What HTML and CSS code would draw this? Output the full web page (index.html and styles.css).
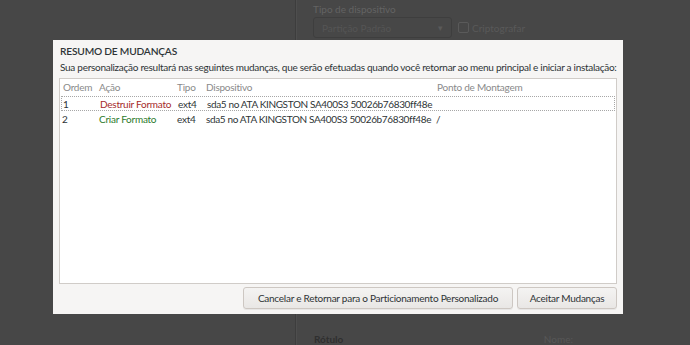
FILE: index.html
```html
<!DOCTYPE html>
<html lang="pt">
<head>
<meta charset="utf-8">
<link rel="stylesheet" href="styles.css">
</head>
<body>
<div class="window">
  <div class="left-pane"></div>
  <div class="sep"></div>
  <div class="right-pane">
    <div class="field-label">Tipo de dispositivo</div>
    <div class="field-row">
      <div class="combo"><span>Partição Padrão</span><span class="arrow">▾</span></div>
      <div class="check"><span class="box"></span><span>Criptografar</span></div>
    </div>
    <div class="spacer"></div>
    <div class="bottom-row">
      <span class="rotulo">Rótulo</span>
      <span class="nome">Nome:</span>
    </div>
  </div>
</div>

<div class="dialog">
  <div class="title">RESUMO DE MUDANÇAS</div>
  <div class="subtitle">Sua personalização resultará nas seguintes mudanças, que serão efetuadas quando você retornar ao menu principal e iniciar a instalação:</div>
  <div class="table">
    <div class="row head">
      <span class="c-ord">Ordem</span>
      <span class="c-acao">Ação</span>
      <span class="c-tipo">Tipo</span>
      <span class="c-disp">Dispositivo</span>
      <span class="c-ponto">Ponto de Montagem</span>
    </div>
    <div class="row focus">
      <span class="c-ord">1</span>
      <span class="c-acao destroy">Destruir Formato</span>
      <span class="c-tipo">ext4</span>
      <span class="c-disp">sda5 no ATA KINGSTON SA400S3 50026b76830ff48e</span>
      <span class="c-ponto"></span>
    </div>
    <div class="row">
      <span class="c-ord">2</span>
      <span class="c-acao create">Criar Formato</span>
      <span class="c-tipo">ext4</span>
      <span class="c-disp">sda5 no ATA KINGSTON SA400S3 50026b76830ff48e</span>
      <span class="c-ponto">/</span>
    </div>
  </div>
  <div class="buttons">
    <button class="btn">Cancelar e Retornar para o Particionamento Personalizado</button>
    <button class="btn">Aceitar Mudanças</button>
  </div>
</div>
</body>
</html>
```
FILE: styles.css
```css
* { box-sizing: border-box; }
html, body {
  margin: 0;
  padding: 0;
  width: 690px;
  height: 345px;
  overflow: hidden;
  background: #474747;
  font-family: "Lato", "Noto Sans", sans-serif;
}
.window {
  display: flex;
  height: 345px;
}
.left-pane {
  width: 295px;
  background: #474747;
}
.sep {
  width: 2px;
  background: #3d3d3d;
  border-right: 1px solid #4e4e4e;
}
.right-pane {
  flex: 1;
  display: flex;
  flex-direction: column;
  padding: 3px 0 0 16px;
  color: #5e5e5e;
  font-size: 10px;
}
.field-label {
  height: 14px;
  color: #636363;
}
.field-row {
  display: flex;
  align-items: center;
  gap: 6px;
}
.combo {
  width: 139px;
  height: 21px;
  border: 1px solid #3e3e3e;
  border-radius: 3px;
  display: flex;
  align-items: center;
  justify-content: space-between;
  padding: 0 8px;
  color: #555;
}
.arrow { font-size: 9px; color: #5a5a5a; }
.check { display: flex; align-items: center; gap: 3px; color: #595959; }
.box {
  width: 11px;
  height: 11px;
  border: 1px solid #5a5a5a;
  border-radius: 2px;
}
.spacer { flex: 1; }
.bottom-row {
  display: flex;
  justify-content: space-between;
  width: 260px;
  height: 11px;
  line-height: 11px;
  padding-left: 1px;
}
.rotulo { color: #2f2f2f; font-weight: bold; }
.nome { color: #575757; }

.dialog {
  position: absolute;
  left: 53px;
  top: 40px;
  width: 570px;
  height: 274px;
  background: #f6f5f4;
  padding: 3px 6px 0 6px;
  color: #2e3436;
  font-size: 10px;
  letter-spacing: -0.25px;
  display: flex;
  flex-direction: column;
}
.title {
  height: 16px;
  line-height: 16px;
  padding-left: 1px;
  font-size: 10.2px;
  font-weight: 600;
  letter-spacing: -0.2px;
}
.subtitle {
  height: 19px;
  line-height: 16px;
  padding-left: 1px;
  white-space: nowrap;
  letter-spacing: -0.28px;
}
.table {
  height: 206px;
  flex: none;
  background: #fff;
  border: 1px solid #d0ccc8;
}
.row {
  display: flex;
  height: 16px;
  line-height: 14px;
  align-items: center;
  white-space: nowrap;
}
.row.head {
  height: 16px;
  color: #8a8a8a;
}
.row.focus {
  height: 15px;
  margin: 1px 1px 0 1px;
  border: 1px dotted #a7a7a7;
}
.c-ord { width: 39px; padding-left: 3px; }
.c-acao { width: 78px; }
.c-tipo { width: 29px; }
.c-disp { width: 230px; }
.c-ponto { flex: 1; }
.head .c-ponto { padding-left: 1px; }
.row:not(.head) .c-disp { letter-spacing: -0.36px; }
.row.focus .c-ord { padding-left: 1px; width: 38px; }
.row:not(.head):not(.focus) .c-ord { padding-left: 2px; }
.destroy { color: #a62a2a; }
.create { color: #2b7a2b; }
.buttons {
  display: flex;
  justify-content: flex-end;
  gap: 4px;
  margin-top: 3px;
}
.btn {
  height: 22px;
  padding: 0 8px;
  border: 1px solid #cdc7c2;
  border-radius: 3px;
  background: linear-gradient(#f4f3f2, #e9e7e5);
  box-shadow: 0 1px 0 rgba(0,0,0,0.06);
  font-family: inherit;
  font-size: 10px;
  letter-spacing: -0.25px;
  color: #2e3436;
  white-space: nowrap;
}
.btn:first-child { width: 270px; }
.btn:last-child { width: 100px; }
```
